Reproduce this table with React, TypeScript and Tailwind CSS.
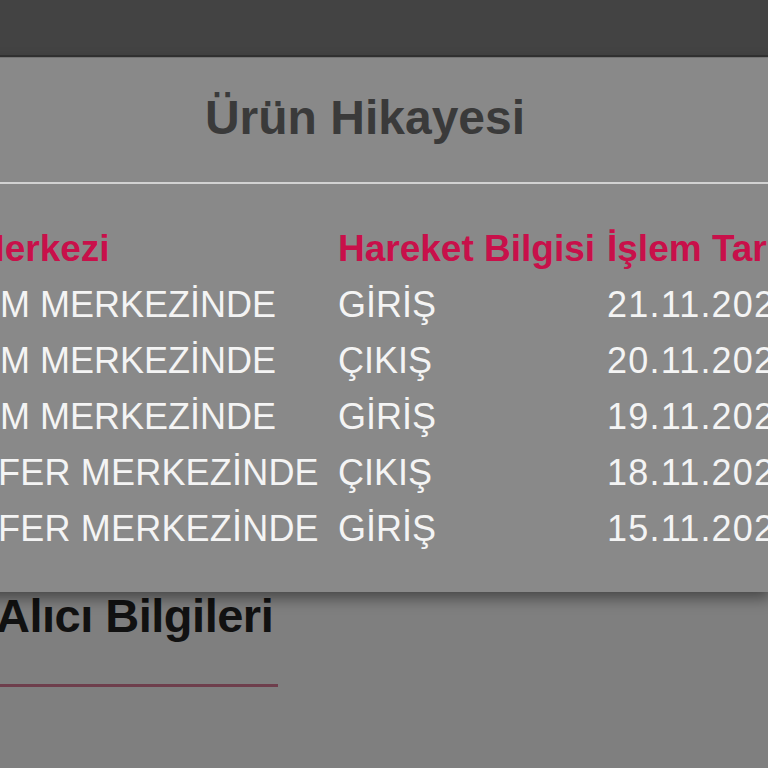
import React from "react"

const rows = [
  { merkez: "DAĞITIM MERKEZİNDE", hareket: "GİRİŞ", tarih: "21.11.2023" },
  { merkez: "DAĞITIM MERKEZİNDE", hareket: "ÇIKIŞ", tarih: "20.11.2023" },
  { merkez: "DAĞITIM MERKEZİNDE", hareket: "GİRİŞ", tarih: "19.11.2023" },
  { merkez: "TRANSFER MERKEZİNDE", hareket: "ÇIKIŞ", tarih: "18.11.2023" },
  { merkez: "TRANSFER MERKEZİNDE", hareket: "GİRİŞ", tarih: "15.11.2023" },
]

export default function App() {
  return (
    <div className="relative w-full h-[768px] overflow-hidden bg-[#7f7f7f] font-['Liberation_Sans',Arial,sans-serif]">
      {/* page behind the dimmed overlay */}
      <div className="h-[57px] bg-[#434343] border-b-2 border-[#333333]" />
      <div className="pt-[531px] -ml-[4px]">
        <h2 className="text-[47px] leading-[56px] font-bold text-[#111111] tracking-[-0.5px]">Alıcı Bilgileri</h2>
        <div className="mt-[40px] ml-[4px] w-[278px] h-[3px] bg-[#6e3e4c]" />
      </div>

      {/* modal */}
      <div className="absolute top-[58px] left-[-40px] w-[810px] h-[534px] bg-[#898989] shadow-[0_6px_14px_rgba(0,0,0,0.45)]">
        <div className="h-[124px] flex items-center justify-center">
          <h1 className="text-[48px] font-bold text-[#3a3a3a] -mt-[4px]">Ürün Hikayesi</h1>
        </div>
        <div className="h-[2px] bg-[#d2d2d2]" />

        <div className="-ml-[80px] mt-[37px] text-[36px]">
          <div className="grid grid-cols-[458px_269px_auto] h-[56px] items-center font-bold text-[37px] text-[#c8104a] whitespace-nowrap">
            <span className="-ml-[11px]">Birim Merkezi</span>
            <span>Hareket Bilgisi</span>
            <span>İşlem Tarihi</span>
          </div>
          {rows.map((r, i) => (
            <div
              key={i}
              className="grid grid-cols-[458px_269px_auto] h-[56px] items-center text-[#f4f4f4] whitespace-nowrap"
            >
              <span className={i > 2 ? "-ml-[5px] tracking-[0.2px]" : ""}>{r.merkez}</span>
              <span>{r.hareket}</span>
              <span className="tracking-[1.2px]">{r.tarih}</span>
            </div>
          ))}
        </div>
      </div>
    </div>
  )
}
